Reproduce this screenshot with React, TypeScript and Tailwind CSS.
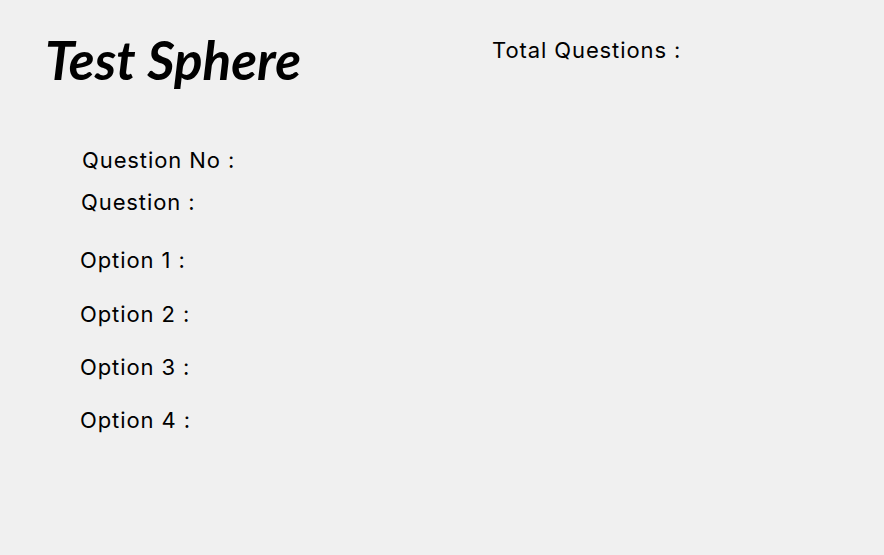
export default function App() {
  return (
    <div className="w-[884px] h-[555px] bg-[#f0f0f0] text-black overflow-hidden" style={{ fontFamily: "Inter, sans-serif" }}>
      <div className="flex items-start pt-[30px]">
        <h1 className="ml-[45px] w-[447px] text-[53px] leading-[60px] font-bold italic" style={{ fontFamily: "Lato, sans-serif" }}>Test Sphere</h1>
        <div className="text-[22px] leading-[30px] mt-[5px] tracking-[0.9px]">Total Questions :</div>
      </div>
      <div className="flex flex-col pl-[80px] text-[22px] leading-[30px] mt-[55px] tracking-[0.9px]">
        <div className="ml-[2px]">Question No :</div>
        <div className="ml-[1px] mt-[12px]">Question :</div>
        <div className="mt-[28px]">Option 1 :</div>
        <div className="mt-[24px]">Option 2 :</div>
        <div className="mt-[23px]">Option 3 :</div>
        <div className="mt-[23px]">Option 4 :</div>
      </div>
    </div>
  );
}
